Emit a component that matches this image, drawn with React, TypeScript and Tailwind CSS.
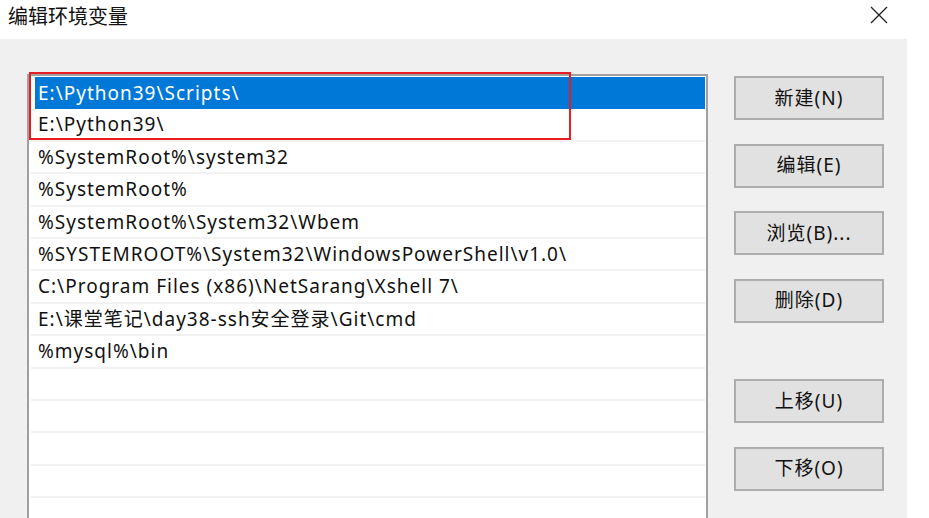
import React from "react";

const font = { fontFamily: '"Noto Sans", "Noto Sans CJK SC", sans-serif' };

const rows = [
  "E:\\Python39\\Scripts\\",
  "E:\\Python39\\",
  "%SystemRoot%\\system32",
  "%SystemRoot%",
  "%SystemRoot%\\System32\\Wbem",
  "%SYSTEMROOT%\\System32\\WindowsPowerShell\\v1.0\\",
  "C:\\Program Files (x86)\\NetSarang\\Xshell 7\\",
  "E:\\课堂笔记\\day38-ssh安全登录\\Git\\cmd",
  "%mysql%\\bin",
  "",
  "",
  "",
  "",
  "",
];

function Btn({ label, className = "" }: { label: string; className?: string }) {
  return (
    <div
      className={`w-[150px] h-[44px] border-2 border-[#adadad] bg-[#e1e1e1] flex items-center justify-center text-[19px] tracking-[1px] text-[#111] ${className}`}
    >
      {label}
    </div>
  );
}

export default function App() {
  return (
    <div
      className="w-[929px] h-[518px] bg-white overflow-hidden flex flex-col font-['Noto_Sans','Noto_Sans_CJK_SC',sans-serif]"
      style={font}
    >
      <div className="h-[39px] w-[907px] flex items-center justify-between pl-[8px] pr-[19px] shrink-0">
        <span className="text-[20px] text-[#111] leading-none -mt-[7px] font-['Noto_Sans_CJK_SC',sans-serif]">
          编辑环境变量
        </span>
        <svg width="18" height="18" viewBox="0 0 18 18" className="-mt-[9px]">
          <path d="M1 1 L17 17 M17 1 L1 17" stroke="#222" strokeWidth="1.3" fill="none" />
        </svg>
      </div>
      <div className="w-[907px] flex-1 bg-[#f0f0f0] flex pl-[27px] pt-[35px]">
        <div className="relative w-[681px] h-[520px] shrink-0">
          <div className="w-full h-full border-2 border-[#a0a0a0] bg-white pt-[1px] pl-[2px] pr-[1px] overflow-hidden">
            {rows.map((r, i) =>
              i === 0 ? (
                <div
                  key={i}
                  className="h-[32.4px] ml-[4px] bg-[#0078d7] text-white text-[19px] tracking-[1px] flex items-center pl-[3px] whitespace-nowrap"
                >
                  {r}
                </div>
              ) : (
                <div
                  key={i}
                  className="h-[32.4px] border-b-2 border-[#f2f2f2] text-[19px] tracking-[1px] text-[#111] flex items-center pl-[7px] whitespace-nowrap"
                >
                  {r}
                </div>
              )
            )}
          </div>
          <div className="absolute left-[2px] top-[-2px] w-[542px] h-[68px] border-2 border-[#e81c24]" />
        </div>
        <div className="ml-[26px] pt-[2px] flex flex-col gap-[23.5px]">
          <Btn label="新建(N)" />
          <Btn label="编辑(E)" />
          <Btn label="浏览(B)..." />
          <Btn label="删除(D)" />
          <Btn label="上移(U)" className="mt-[33px]" />
          <Btn label="下移(O)" />
        </div>
      </div>
    </div>
  );
}
